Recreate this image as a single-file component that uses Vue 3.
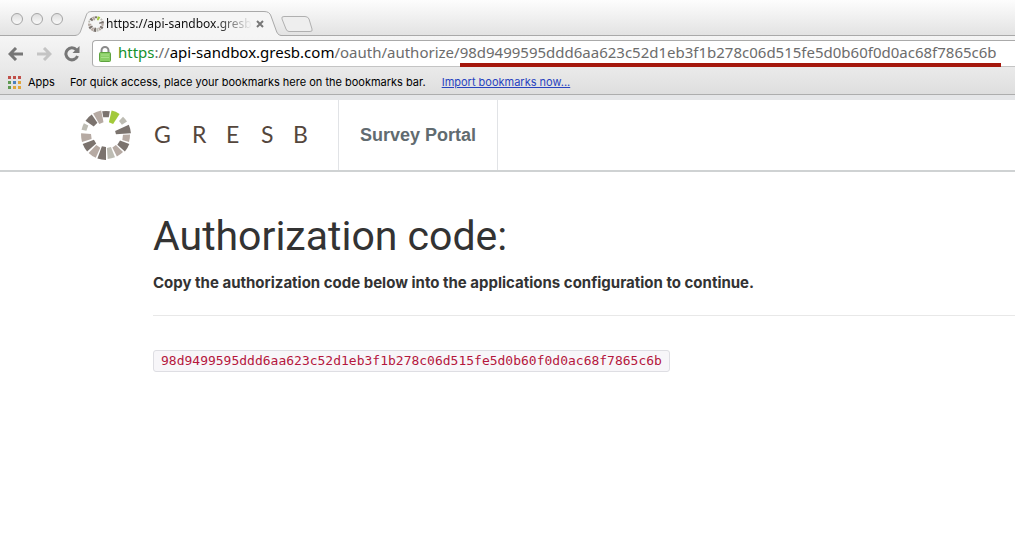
<script setup>
import { ref } from 'vue'

const code = '98d9499595ddd6aa623c52d1eb3f1b278c06d515fe5d0b60f0d0ac68f7865c6b'
const address = ref('https://api-sandbox.gresb.com/oauth/authorize/' + code)

const wheel = [
  { angle: 0, inner: 18, outer: 24, half: 9, fill: '#7b736e' },
  { angle: 23, inner: 13, outer: 25, half: 10, fill: '#a2c93a' },
  { angle: 50, inner: 19, outer: 25, half: 7, fill: '#bdbcb3' },
  { angle: 76, inner: 10, outer: 25, half: 10, fill: '#7b736e' },
  { angle: 98, inner: 17, outer: 24, half: 9, fill: '#b6aaa3' },
  { angle: 121, inner: 15, outer: 25, half: 10, fill: '#7b736e' },
  { angle: 144, inner: 14, outer: 24, half: 9, fill: '#b6aaa3' },
  { angle: 167, inner: 13, outer: 24, half: 9, fill: '#bdbcb3' },
  { angle: 190, inner: 12, outer: 25, half: 10, fill: '#7b736e' },
  { angle: 214, inner: 14, outer: 25, half: 10, fill: '#b6aaa3' },
  { angle: 239, inner: 13, outer: 25, half: 10, fill: '#7b736e' },
  { angle: 264, inner: 15, outer: 25, half: 10, fill: '#b6aaa3' },
  { angle: 290, inner: 20, outer: 25, half: 8, fill: '#bdbcb3' },
  { angle: 315, inner: 15, outer: 25, half: 10, fill: '#7b736e' },
  { angle: 339, inner: 13, outer: 25, half: 10, fill: '#b6aaa3' }
]

function point(radius, degrees) {
  const a = (degrees * Math.PI) / 180
  return `${(25 + radius * Math.sin(a)).toFixed(1)} ${(25 - radius * Math.cos(a)).toFixed(1)}`
}

function segment({ angle, inner, outer, half }) {
  return `M${point(inner, angle - half)}L${point(outer, angle - half)}A${outer} ${outer} 0 0 1 ${point(outer, angle + half)}L${point(inner, angle + half)}Z`
}

const dots = ['#c0504a', '#c0504a', '#c0504a', '#5f9a52', '#4b7fc0', '#e0a53c', '#5f9a52', '#e0a53c', '#e0a53c']
</script>

<template>
  <div class="browser">
    <div class="chrome">
      <div class="tab-strip">
        <div class="lights">
          <button aria-label="Close window"></button>
          <button aria-label="Minimize window"></button>
          <button aria-label="Zoom window"></button>
        </div>
        <div class="tab">
          <svg class="tab-shape" viewBox="0 0 206 25" aria-hidden="true">
            <path d="M0 24.5C4 24 5 22 6 19L11 5C12 2 13 .5 17 .5H189C193 .5 195 2 196 5L201 19C202 22 203 24 206 24.5V25H0Z" fill="#f5f5f5" />
            <path d="M0 24.5C4 24 5 22 6 19L11 5C12 2 13 .5 17 .5H189C193 .5 195 2 196 5L201 19C202 22 203 24 206 24.5" fill="none" stroke="#a9a9a9" />
          </svg>
          <svg class="favicon" viewBox="0 0 50 50" aria-hidden="true">
            <path v-for="s in wheel" :key="s.angle" :d="segment(s)" :fill="s.fill" />
          </svg>
          <span class="tab-title">https://api-sandbox.gresb</span>
          <button class="tab-close" aria-label="Close tab">
            <svg width="8" height="8" viewBox="0 0 8 8"><path d="M1 1L7 7M7 1L1 7" stroke="#777" stroke-width="2" /></svg>
          </button>
        </div>
        <button class="new-tab" aria-label="New tab">
          <svg width="32" height="17" viewBox="0 0 32 17">
            <path d="M3 .5H24Q27 .5 28 3L31 13Q32 15.500 29 15.500H8Q6 15.500 5 13L1 3Q0 .5 3 .5Z" fill="#eee" stroke="#b0b0b0" />
          </svg>
        </button>
      </div>

      <div class="toolbar">
        <button aria-label="Back">
          <svg width="16" height="14" viewBox="0 0 16 14"><path d="M8 1L2 7L8 13M2.500 7H15" fill="none" stroke="#777" stroke-width="3" /></svg>
        </button>
        <button aria-label="Forward">
          <svg width="16" height="14" viewBox="0 0 16 14"><path d="M8 1L14 7L8 13M13.500 7H1" fill="none" stroke="#c4c4c4" stroke-width="3" /></svg>
        </button>
        <button aria-label="Reload">
          <svg width="16" height="16" viewBox="0 0 16 16">
            <path d="M12.500 4A6 6 0 1 0 13.500 10" fill="none" stroke="#777" stroke-width="3" />
            <path d="M15.500 0V7H8.500Z" fill="#777" />
          </svg>
        </button>
        <div class="address">
          <svg class="lock" width="12" height="16" viewBox="0 0 12 16" aria-hidden="true">
            <path d="M2.500 8V4.500A3.500 3.500 0 0 1 9.500 4.500V8" fill="none" stroke="#8b8b8b" stroke-width="2" />
            <rect x=".5" y="6.500" width="11" height="9" rx="1" fill="#8ace66" stroke="#5ea340" />
            <path d="M2 9H10M2 11.500H10" stroke="#a9e089" />
          </svg>
          <div class="url" aria-hidden="true"><span class="scheme">https</span><span>://</span><span class="host">api-sandbox.gresb.com</span><span>/oauth/authorize/</span><span class="marked">{{ code }}</span></div>
          <input v-model="address" class="address-input" type="text" aria-label="Address" spellcheck="false" />
        </div>
      </div>

      <div class="bookmarks">
        <button class="apps">
          <svg width="13" height="13" viewBox="0 0 13 13" aria-hidden="true">
            <rect v-for="(c, i) in dots" :key="i" :x="(i % 3) * 5" :y="Math.floor(i / 3) * 5" width="3" height="3" :fill="c" />
          </svg>
          Apps
        </button>
        <span class="hint">For quick access, place your bookmarks here on the bookmarks bar.</span>
        <a href="#">Import bookmarks now...</a>
      </div>
    </div>

    <header class="site-header">
      <a class="logo" href="#" aria-label="GRESB">
        <svg width="50" height="50" viewBox="0 0 50 50" aria-hidden="true">
          <path v-for="s in wheel" :key="s.angle" :d="segment(s)" :fill="s.fill" />
        </svg>
        <svg class="wordmark" width="156" height="40" viewBox="0 0 156 40">
          <text x="0 38 72 107 139" y="28">GRESB</text>
        </svg>
      </a>
      <a class="portal" href="#">Survey Portal</a>
    </header>

    <main>
      <h1>Authorization code:</h1>
      <p>Copy the authorization code below into the applications configuration to continue.</p>
      <hr />
      <code>{{ code }}</code>
    </main>
  </div>
</template>

<style>
body {
  margin: 0;
  background: #fff;
}
</style>

<style scoped>
.browser {
  overflow-x: hidden;
  font-family: "Liberation Sans", Arial, sans-serif;
  color: #333;
}
button {
  display: flex;
  align-items: center;
  padding: 0;
  border: 0;
  background: none;
  font: inherit;
  color: inherit;
}
.chrome {
  border-bottom: 1px solid #adadad;
  background: #e4e4e4;
  font-family: "Noto Sans", "Open Sans", sans-serif;
}
.tab-strip {
  display: flex;
  align-items: flex-end;
  height: 36px;
  box-sizing: border-box;
  background: linear-gradient(#fdfdfd, #e2e2e2);
  box-shadow: inset 0 -1px #a9a9a9;
}
.lights {
  display: flex;
  align-self: flex-start;
  gap: 8px;
  margin: 13px 12px 0 11px;
}
.lights button {
  width: 12px;
  height: 12px;
  border: 1px solid #a5a5a5;
  border-radius: 50%;
  background: linear-gradient(#dedede, #fafafa);
}
.tab {
  position: relative;
  display: flex;
  align-items: center;
  width: 206px;
  height: 25px;
  box-sizing: border-box;
  padding: 0 18px 0 13px;
}
.tab-shape {
  position: absolute;
  inset: 0;
}
.favicon {
  position: relative;
  flex: none;
  width: 16px;
  height: 16px;
  margin-right: 2px;
}
.tab-title {
  position: relative;
  flex: 1;
  color: #111;
  font-size: 12px;
  line-height: 24px;
  white-space: nowrap;
  mask-image: linear-gradient(90deg, #000 75%, transparent);
}
.tab-close {
  position: relative;
  margin-left: 4px;
}
.new-tab {
  align-self: center;
  margin: 12px 0 0;
}
.toolbar {
  display: flex;
  align-items: center;
  gap: 12px;
  padding: 4px 0 3px 8px;
  background: linear-gradient(#f5f5f5, #e9e9e9);
}
.address {
  position: relative;
  display: flex;
  flex: 1;
  align-items: center;
  min-width: 0;
  height: 27px;
  box-sizing: border-box;
  padding-left: 6px;
  border: 1px solid #aaa;
  border-right: 0;
  border-bottom-color: #c4c4c4;
  border-radius: 4px 0 0 4px;
  background: #fff;
}
.lock {
  flex: none;
  margin-right: 7px;
}
.url {
  color: #6c6c6c;
  font-size: 15px;
  line-height: 22px;
  white-space: nowrap;
}
.scheme {
  color: #16912c;
}
.host {
  color: #000;
}
.marked {
  display: inline-block;
  padding-right: 4px;
  border-bottom: 4px solid #a5180d;
}
.address-input {
  position: absolute;
  inset: 0;
  width: 100%;
  box-sizing: border-box;
  padding: 0 0 0 25px;
  border: 0;
  outline: 0;
  background: transparent;
  color: transparent;
  caret-color: #000;
  font: 15px "Noto Sans", "Open Sans", sans-serif;
}
.bookmarks {
  display: flex;
  align-items: center;
  height: 24px;
  padding: 0 8px;
  background: linear-gradient(#e9e9e9, #dedede);
  color: #000;
  font-family: Inter, sans-serif;
  font-size: 11px;
  line-height: 22px;
  white-space: nowrap;
}
.apps {
  gap: 7px;
  margin-right: 15px;
}
.bookmarks a {
  margin-left: 16px;
  color: #2743c0;
}
.site-header {
  display: flex;
  height: 70px;
  border-top: 5px solid #e5e6e8;
  border-bottom: 2px solid #cfd2d3;
}
.logo {
  display: flex;
  align-items: center;
  gap: 23px;
  margin-left: 81px;
  padding-right: 28px;
}
.wordmark text {
  fill: #54463c;
  font-family: Lato, sans-serif;
  font-size: 23px;
}
.portal {
  display: flex;
  align-items: center;
  padding: 0 21px;
  border: solid #e1e3e6;
  border-width: 0 1px;
  color: #616b70;
  font-size: 18px;
  font-weight: 700;
  text-decoration: none;
}
main {
  padding: 40px 0 40px 153px;
}
h1 {
  margin: 0;
  font-family: Roboto, sans-serif;
  font-size: 41px;
  font-weight: 400;
  line-height: 48px;
}
p {
  margin: 11px 0 20px;
  font-family: Inter, sans-serif;
  font-size: 15px;
  font-weight: 700;
  line-height: 24px;
}
hr {
  margin: 0 0 34px;
  border: 0;
  border-top: 1px solid #e8e8e8;
}
code {
  display: inline-block;
  padding: 0 7px;
  border: 1px solid #dedee3;
  border-radius: 3px;
  background: #f7f6f9;
  color: #b5173d;
  font-family: "DejaVu Sans Mono", monospace;
  font-size: 13px;
  line-height: 20px;
}
</style>
